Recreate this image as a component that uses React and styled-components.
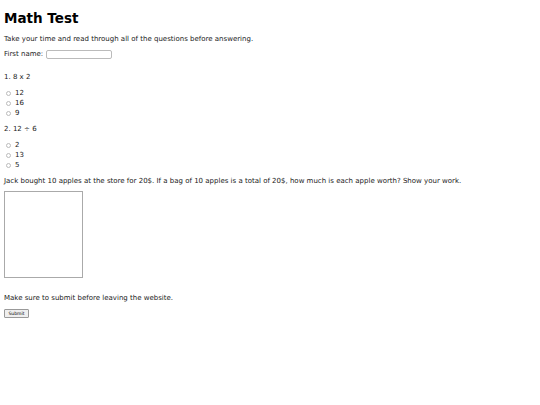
import React from 'react';
import styled, { createGlobalStyle } from 'styled-components';

const Global = createGlobalStyle`
	body {
		margin: 0;
		font-family: "DejaVu Sans", Verdana, sans-serif;
		font-size: 7px;
		color: #1a1a1a;
		background: #fff;
	}
`;

const Page = styled.div`
	display: flex;
	flex-direction: column;
	align-items: flex-start;
	padding: 4px;
`;

const Title = styled.h1`
	font-size: 13.5px;
	line-height: 16px;
	font-weight: bold;
	margin: 5.5px 0 0;
	color: #000;
`;

const Text = styled.p`
	margin: ${(p) => p.$top || 6.5}px 0 0;
	line-height: 9px;
`;

const Field = styled.div`
	display: flex;
	align-items: center;
	gap: 3px;
	height: 9px;
	margin-top: 6px;
`;

const NameInput = styled.input`
	box-sizing: border-box;
	width: 66px;
	height: 9px;
	padding: 0;
	border: 1px solid #bbb;
	border-radius: 2px;
	font-size: 7px;
`;

const Options = styled.div`
	display: flex;
	flex-direction: column;
	margin-top: 6.5px;
`;

const Option = styled.label`
	display: flex;
	align-items: center;
	height: 10px;
	gap: 4px;
	padding-left: 2px;
`;

const Radio = styled.span`
	box-sizing: border-box;
	width: 5px;
	height: 5px;
	border: 1px solid #bbb;
	border-radius: 50%;
	background: #fff;
`;

const Work = styled.textarea`
	box-sizing: border-box;
	display: block;
	width: 79px;
	height: 87px;
	padding: 0;
	margin: 5.5px 0 0;
	border: 1px solid #aaa;
	resize: none;
`;

const SubmitBtn = styled.button`
	box-sizing: border-box;
	font-family: "DejaVu Sans", Verdana, sans-serif;
	font-size: 4.5px;
	margin-top: 6.5px;
	padding: 0 2px;
	width: 25px;
	height: 9px;
	border: 1px solid #999;
	border-radius: 1px;
	background: #efefef;
	color: #000;
`;

const questions = [
	{ q: '1. 8 x 2', opts: ['12', '16', '9'] },
	{ q: '2. 12 ÷ 6', opts: ['2', '13', '5'] },
];

const App = () => {
	return (
		<Page>
			<Global />
			<Title>Math Test</Title>
			<Text $top={9}>Take your time and read through all of the questions before answering.</Text>
			<Field>
				<span>First name:</span>
				<NameInput />
			</Field>
			<Text $top={14}>{questions[0].q}</Text>
			<Options>
				{questions[0].opts.map((o) => (
					<Option key={o}>
						<Radio />
						{o}
					</Option>
				))}
			</Options>
			<Text>{questions[1].q}</Text>
			<Options>
				{questions[1].opts.map((o) => (
					<Option key={o}>
						<Radio />
						{o}
					</Option>
				))}
			</Options>
			<Text>
				Jack bought 10 apples at the store for 20$. If a bag of 10 apples is a total of 20$, how much is each apple worth? Show your work.
			</Text>
			<Work />
			<Text $top={15.5}>Make sure to submit before leaving the website.</Text>
			<SubmitBtn>Submit</SubmitBtn>
		</Page>
	);
};

export default App;
